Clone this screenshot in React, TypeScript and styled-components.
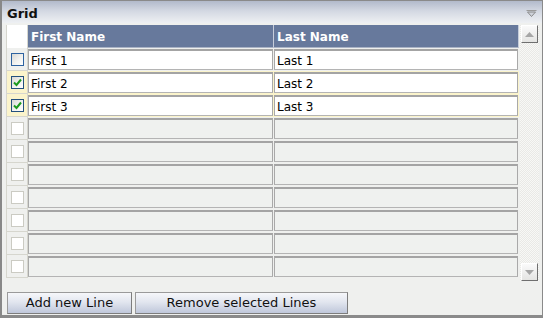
import React, { useState } from 'react';
import styled, { createGlobalStyle } from 'styled-components';

const GlobalStyle = createGlobalStyle`
  html, body {
    margin: 0;
    padding: 0;
    background: #ffffff;
  }
  * {
    box-sizing: border-box;
  }
`;

const Panel = styled.div`
  width: 543px;
  height: 318px;
  border: 1px solid #8a8a8a;
  border-left: 2px solid #888;
  border-bottom: 3px solid #8a8a8a;
  background: #eff0ee;
  font-family: 'DejaVu Sans', 'Liberation Sans', sans-serif;
  display: flex;
  flex-direction: column;
  overflow: hidden;
`;

const TitleBar = styled.div`
  height: 22px;
  flex-shrink: 0;
  display: flex;
  align-items: center;
  justify-content: space-between;
  padding: 2px 5px 0 5px;
  background: linear-gradient(to bottom, #b2bacb 0%, #d3d8e2 45%, #eef0f3 100%);
  & > strong {
    font-size: 13px;
    font-weight: bold;
    color: #111;
  }
`;

const Body = styled.div`
  padding: 2px 3px 0 4px;
  display: flex;
  flex-direction: column;
`;

const GridBox = styled.div`
  display: flex;
  height: 256px;
`;

const Table = styled.div`
  width: 513px;
  display: flex;
  flex-direction: column;
`;

const HeaderRow = styled.div`
  display: grid;
  grid-template-columns: 22px 246px 245px;
  height: 23px;
`;

const HeadCorner = styled.div`
  background: #ffffff;
  border-left: 1px solid #d6d6ce;
  border-right: 1px solid #d6d6ce;
`;

const HeadCell = styled.div`
  background: #67799c;
  color: #ffffff;
  font-size: 12px;
  font-weight: bold;
  display: flex;
  align-items: center;
  padding: 2px 0 0 3px;
  border-right: 1px solid #c6cddb;
  border-bottom: 1px solid #aab3c5;
`;

const Row = styled.div<{ $selected: boolean }>`
  display: grid;
  grid-template-columns: 22px 246px 245px;
  height: 23px;
  background: ${({ $selected }) => ($selected ? '#fbf4cb' : '#eff0ee')};
`;

const CheckCell = styled.div`
  display: flex;
  align-items: center;
  justify-content: center;
  border-left: 1px solid #d6d6ce;
  border-right: 1px solid #d6d6ce;
  border-bottom: 1px solid #d6d6ce;
`;

const Box = styled.span<{ $kind: 'on' | 'off' | 'empty' }>`
  width: 13px;
  height: 13px;
  display: flex;
  align-items: center;
  justify-content: center;
  border: 1px solid
    ${({ $kind }) => ($kind === 'empty' ? '#cbcbc3' : $kind === 'on' ? '#23507e' : '#2d62a0')};
  background: ${({ $kind }) =>
    $kind === 'empty' ? '#ffffff' : 'linear-gradient(135deg, #d8d8d4 0%, #f2f2f0 55%, #ffffff 100%)'};
`;

const FieldCell = styled.div`
  padding: 1px 1px 1px 0;
`;

const Field = styled.div<{ $filled: boolean }>`
  height: 21px;
  border: 1px solid #a9a9a9;
  border-top: 2px solid #a4a4a4;
  border-bottom-color: #b4b4b4;
  background: ${({ $filled }) => ($filled ? '#ffffff' : '#eff1ef')};
  font-size: 12px;
  color: #000;
  display: flex;
  align-items: center;
  padding: 1px 0 0 2px;
`;

const ScrollBar = styled.div`
  width: 19px;
  margin-left: 1px;
  display: flex;
  flex-direction: column;
  justify-content: space-between;
  align-items: flex-start;
  padding-left: 1px;
  background: repeating-conic-gradient(#f8f8f6 0 25%, #e9e9e6 0 50%) 0 0 / 2px 2px;
`;

const ScrollBtn = styled.div`
  width: 17px;
  height: 18px;
  display: flex;
  align-items: center;
  justify-content: center;
  background: linear-gradient(to bottom, #fafafa, #e4e4e2);
  border-top: 1px solid #ffffff;
  border-left: 1px solid #ffffff;
  border-right: 1px solid #6f6f6f;
  border-bottom: 1px solid #6f6f6f;
`;

const Footer = styled.div`
  display: flex;
  gap: 3px;
  margin-top: 11px;
  padding-left: 1px;
`;

const Button = styled.button<{ $w: number }>`
  width: ${({ $w }) => $w}px;
  height: 22px;
  font-family: 'DejaVu Sans', 'Liberation Sans', sans-serif;
  font-size: 13px;
  color: #111;
  border: 1px solid #9a9a9a;
  border-right-color: #7d7d7d;
  border-bottom-color: #7d7d7d;
  background: linear-gradient(to bottom, #f6f7fa 0%, #e2e6ef 45%, #bfc7da 100%);
  padding: 0 0 1px 0;
  cursor: pointer;
`;

const Check = () => (
  <svg width="9" height="9" viewBox="0 0 9 9">
    <path d="M1 4.5 L3.5 7 L8 1.5" stroke="#1d9a1d" strokeWidth="2" fill="none" />
  </svg>
);

const Arrow = ({ up }: { up: boolean }) => (
  <svg width="9" height="5" viewBox="0 0 9 5">
    <path d={up ? 'M4.5 0 L9 5 L0 5 Z' : 'M0 0 L9 0 L4.5 5 Z'} fill="#a6a6a6" />
  </svg>
);

const Collapse = () => (
  <svg width="11" height="7" viewBox="0 0 11 7">
    <path d="M0.5 0.5 H10.5" stroke="#9a9a9a" strokeWidth="1" />
    <path d="M1.5 2 L9.5 2 L5.5 6.5 Z" fill="#cfd3db" stroke="#8a8a8a" strokeWidth="1" />
  </svg>
);

const initial = [
  { first: 'First 1', last: 'Last 1', checked: false },
  { first: 'First 2', last: 'Last 2', checked: true },
  { first: 'First 3', last: 'Last 3', checked: true },
];

const App = () => {
  const [lines, setLines] = useState(initial);
  const rows = Array.from({ length: 10 }, (_, i) => lines[i]);

  const toggle = (idx: number) => {
    setLines(lines.map((l, i) => (i === idx ? { ...l, checked: !l.checked } : l)));
  };

  return (
    <>
      <GlobalStyle />
      <Panel>
        <TitleBar>
          <strong>Grid</strong>
          <Collapse />
        </TitleBar>
        <Body>
          <GridBox>
            <Table>
              <HeaderRow>
                <HeadCorner />
                <HeadCell>First Name</HeadCell>
                <HeadCell>Last Name</HeadCell>
              </HeaderRow>
              {rows.map((line, idx) => (
                <Row key={idx} $selected={!!line?.checked}>
                  <CheckCell onClick={() => line && toggle(idx)}>
                    <Box $kind={!line ? 'empty' : line.checked ? 'on' : 'off'}>
                      {line?.checked && <Check />}
                    </Box>
                  </CheckCell>
                  <FieldCell>
                    <Field $filled={!!line}>{line?.first}</Field>
                  </FieldCell>
                  <FieldCell>
                    <Field $filled={!!line}>{line?.last}</Field>
                  </FieldCell>
                </Row>
              ))}
            </Table>
            <ScrollBar>
              <ScrollBtn>
                <Arrow up />
              </ScrollBtn>
              <ScrollBtn>
                <Arrow up={false} />
              </ScrollBtn>
            </ScrollBar>
          </GridBox>
          <Footer>
            <Button $w={125}>Add new Line</Button>
            <Button $w={213}>Remove selected Lines</Button>
          </Footer>
        </Body>
      </Panel>
    </>
  );
};

export default App;
